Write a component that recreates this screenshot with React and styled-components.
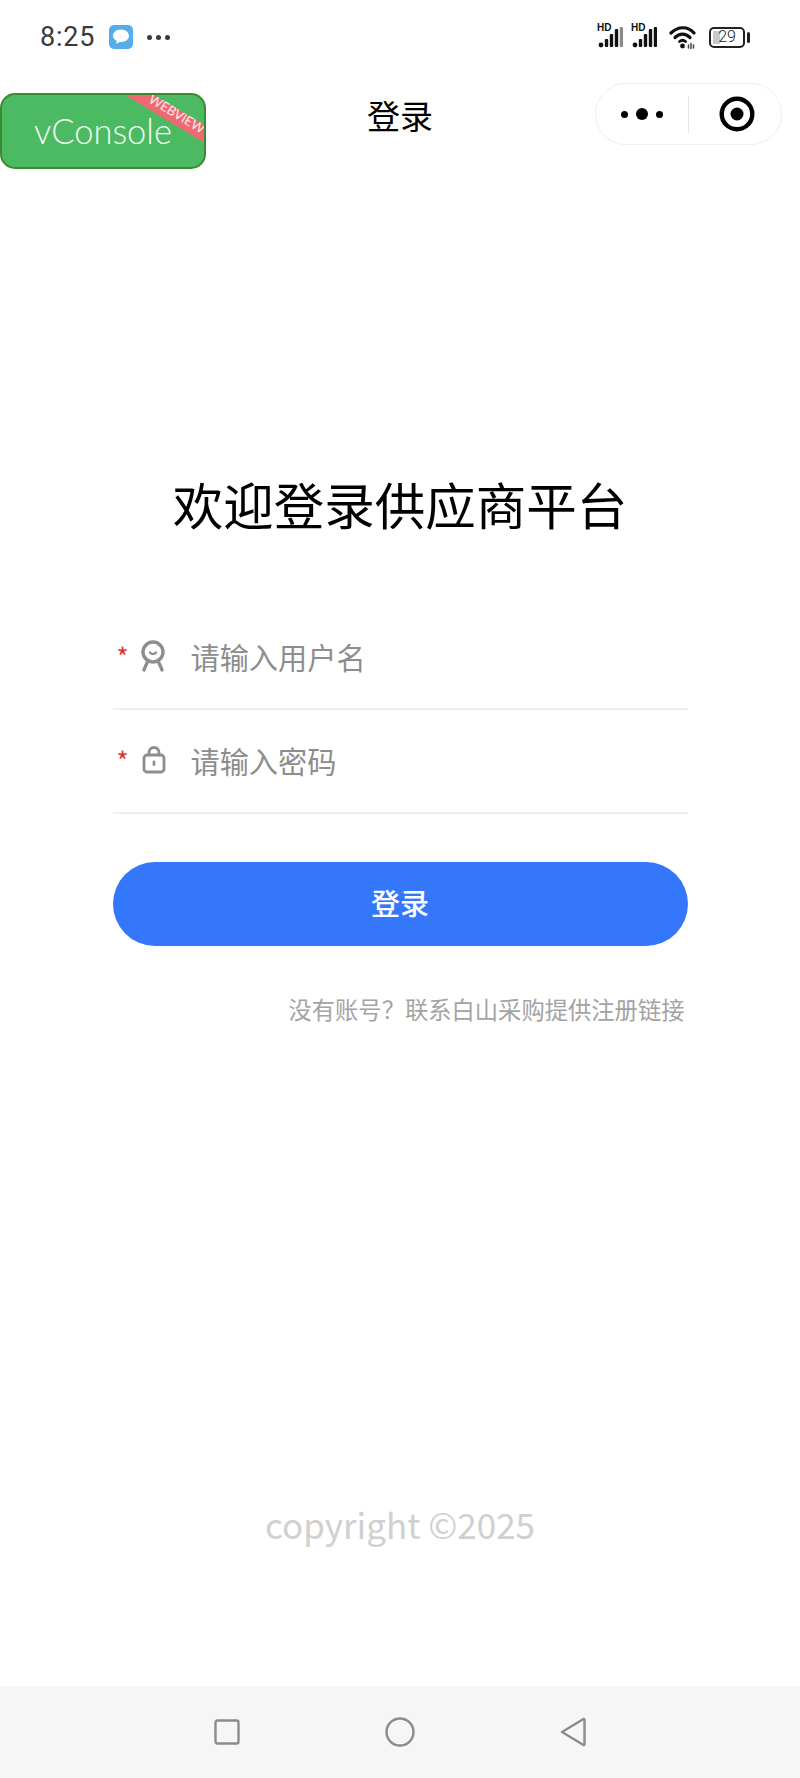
import React from 'react'
import styled, { createGlobalStyle } from 'styled-components'

const CJK = `"Noto Sans CJK SC", "Noto Sans", sans-serif`

const GlobalStyle = createGlobalStyle`
  html, body {
    margin: 0;
    padding: 0;
    background: #fff;
  }
  * {
    box-sizing: border-box;
  }
`

function SignalIcon({ lastColor = '#111' }) {
  return (
    <SignalWrap>
      <SignalLabel>HD</SignalLabel>
      <svg width="25" height="24" viewBox="0 0 25 24">
        <circle cx="3" cy="20" r="2.400" fill="#111" />
        <rect x="6.800" y="14" width="3.400" height="8" rx="1" fill="#111" />
        <rect x="11.800" y="9" width="3.400" height="13" rx="1" fill="#111" />
        <rect x="16.800" y="4" width="3.400" height="18" rx="1" fill="#111" />
        <rect x="21.800" y="2" width="3.200" height="20" rx="1" fill={lastColor} />
      </svg>
    </SignalWrap>
  )
}

function WifiIcon() {
  return (
    <svg width="28" height="24" viewBox="0 0 28 24" fill="none" stroke="#111" strokeLinecap="round">
      <path d="M2 8 C9 1 19 1 25 8" strokeWidth="3.200" />
      <path d="M6 12.500 C10.500 8 16.500 8 21 12.500" strokeWidth="3.200" />
      <path d="M10.500 16.500 C12.300 15 14.700 15 16.500 16.500" strokeWidth="2.800" />
      <circle cx="13.500" cy="21" r="2.400" fill="#111" stroke="none" />
      <path d="M19.500 20v3M22 18.500v5.500M24.500 20v3" stroke="#444" strokeWidth="1.500" />
    </svg>
  )
}

function BadgeIcon() {
  return (
    <svg width="26" height="32" viewBox="0 0 26 32" fill="none" stroke="#8e8e8e" strokeWidth="3.400" strokeLinecap="round">
      <circle cx="13" cy="12" r="10" />
      <path d="M10 12.500 C11 14.500 15 14.500 16 12.500" strokeWidth="2.400" />
      <path d="M8 21 C6.500 24 5 27 4 30 M18 21 C19.500 24 21 27 22 30" />
    </svg>
  )
}

function LockIcon() {
  return (
    <svg width="24" height="28" viewBox="0 0 24 28" fill="none" stroke="#8e8e8e" strokeWidth="2.800" strokeLinecap="round">
      <rect x="2" y="9" width="20" height="17" rx="3" />
      <path d="M7 9 V6.500 C7 3.500 9 1.500 12 1.500 C15 1.500 17 3.500 17 6.500 V9" />
      <path d="M12 16 V18.500" />
    </svg>
  )
}

function App() {
  return (
    <Page>
      <GlobalStyle />
      <StatusBar>
        <StatusLeft>
          <Time>8:25</Time>
          <svg width="24" height="24" viewBox="0 0 24 24">
            <rect width="24" height="24" rx="5" fill="#55aeec" />
            <path d="M12 4.500c-4.500 0-8 2.800-8 6.300 0 2.300 1.500 4.200 3.800 5.300l-.6 3 3.400-2.200c.5.100.9.100 1.400.100 4.500 0 8-2.800 8-6.200s-3.500-6.300-8-6.300z" fill="#fff" />
          </svg>
          <Dots>
            <Dot /><Dot /><Dot />
          </Dots>
        </StatusLeft>
        <StatusRight>
          <SignalIcon lastColor="#8a8a8a" />
          <SignalIcon />
          <WifiIcon />
          <Battery>
            <BatteryBody>
              <BatteryFill />
              <BatteryText>29</BatteryText>
            </BatteryBody>
            <BatteryCap />
          </Battery>
        </StatusRight>
      </StatusBar>

      <NavBar>
        <NavTitle>登录</NavTitle>
        <Capsule>
          <MoreButton>
            <MoreDot /><MoreDot $big /><MoreDot />
          </MoreButton>
          <CapsuleDivider />
          <TargetButton>
            <svg width="36" height="36" viewBox="0 0 36 36">
              <circle cx="18" cy="18" r="15.300" fill="none" stroke="#000" strokeWidth="4.400" />
              <circle cx="18" cy="18" r="6.500" fill="#000" />
            </svg>
          </TargetButton>
        </Capsule>
      </NavBar>

      <VConsole>
        vConsole
        <Ribbon>WEBVIEW</Ribbon>
      </VConsole>

      <Main>
        <Heading>欢迎登录供应商平台</Heading>
        <Form>
          <Field>
            <Required>*</Required>
            <FieldIcon><BadgeIcon /></FieldIcon>
            <Placeholder>请输入用户名</Placeholder>
          </Field>
          <Field>
            <Required>*</Required>
            <FieldIcon $inset={2}><LockIcon /></FieldIcon>
            <Placeholder>请输入密码</Placeholder>
          </Field>
          <LoginButton>登录</LoginButton>
          <Hint>没有账号？联系白山采购提供注册链接</Hint>
        </Form>
      </Main>

      <Copyright>copyright ©2025</Copyright>

      <BottomBar>
        <svg width="26" height="26" viewBox="0 0 26 26">
          <rect x="1.500" y="1.500" width="23" height="23" rx="2" fill="none" stroke="#8c8c8c" strokeWidth="2.400" />
        </svg>
        <svg width="30" height="30" viewBox="0 0 30 30">
          <circle cx="15" cy="15" r="13.500" fill="none" stroke="#8c8c8c" strokeWidth="2.400" />
        </svg>
        <svg width="26" height="30" viewBox="0 0 26 30">
          <path d="M2 15 L23.500 2 Q24.500 1.800 24.500 3 V27 Q24.500 28.200 23.500 28 Z" fill="none" stroke="#8c8c8c" strokeWidth="2.400" strokeLinejoin="round" />
        </svg>
      </BottomBar>
    </Page>
  )
}

export default App

const Page = styled.div`
  position: relative;
  width: 800px;
  height: 1778px;
  display: flex;
  flex-direction: column;
  overflow: hidden;
  background: #fff;
  font-family: ${CJK};
`

const StatusBar = styled.div`
  height: 74px;
  padding: 0 50px 0 40px;
  display: flex;
  align-items: center;
  justify-content: space-between;
`

const StatusLeft = styled.div`
  display: flex;
  align-items: center;
  gap: 14px;
`

const Time = styled.span`
  font-family: Roboto, sans-serif;
  font-size: 27px;
  letter-spacing: 0.8px;
  color: #3a3a3a;
`

const Dots = styled.div`
  display: flex;
  gap: 4px;
`

const Dot = styled.span`
  width: 5px;
  height: 5px;
  border-radius: 50%;
  background: #3a3a3a;
`

const StatusRight = styled.div`
  display: flex;
  align-items: center;
  gap: 12px;
`

const SignalWrap = styled.div`
  position: relative;
  width: 25px;
  height: 24px;

  & + & {
    margin-left: -3px;
  }
`

const SignalLabel = styled.span`
  position: absolute;
  left: -1px;
  top: -2px;
  font-family: "Liberation Sans", sans-serif;
  font-size: 10px;
  line-height: 10px;
  font-weight: 700;
  color: #111;
`

const Battery = styled.div`
  display: flex;
  align-items: center;
  gap: 2px;
`

const BatteryBody = styled.div`
  position: relative;
  width: 36px;
  height: 21px;
  border: 2px solid #222;
  border-radius: 5px;
  display: flex;
  align-items: center;
  justify-content: center;
`

const BatteryFill = styled.div`
  position: absolute;
  left: 2px;
  top: 2px;
  bottom: 2px;
  width: 7px;
  background: #c9c9c9;
`

const BatteryText = styled.span`
  position: relative;
  font-family: Roboto, sans-serif;
  font-size: 16px;
  font-weight: 300;
  line-height: 1;
  color: #222;
`

const BatteryCap = styled.div`
  width: 3px;
  height: 11px;
  border-radius: 2px;
  background: #222;
`

const NavBar = styled.div`
  position: relative;
  height: 82px;
  display: flex;
  align-items: center;
  justify-content: center;
`

const NavTitle = styled.div`
  font-size: 33px;
  line-height: 1;
  color: #000;
`

const Capsule = styled.div`
  position: absolute;
  right: 18px;
  top: 9px;
  width: 187px;
  height: 62px;
  border: 1px solid #efefef;
  border-radius: 31px;
  display: flex;
  align-items: center;
`

const MoreButton = styled.div`
  flex: 0 0 92px;
  display: flex;
  align-items: center;
  justify-content: center;
  gap: 8px;
`

const MoreDot = styled.span`
  width: ${(p) => (p.$big ? 12 : 7)}px;
  height: ${(p) => (p.$big ? 12 : 7)}px;
  border-radius: 50%;
  background: #000;
`

const CapsuleDivider = styled.div`
  width: 1px;
  height: 37px;
  background: #e4e4e4;
`

const TargetButton = styled.div`
  flex: 1;
  padding-left: 4px;
  display: flex;
  align-items: center;
  justify-content: center;
`

const VConsole = styled.div`
  position: absolute;
  left: 0;
  top: 93px;
  width: 206px;
  height: 76px;
  padding-bottom: 2px;
  border: 2px solid #3b8a32;
  border-radius: 15px;
  background: #4cb963;
  color: #f0fcf0;
  overflow: hidden;
  display: flex;
  align-items: center;
  justify-content: center;
  font-family: Lato, sans-serif;
  font-size: 34.500px;
  font-weight: 300;
`

const Ribbon = styled.div`
  position: absolute;
  right: -33px;
  top: 15px;
  width: 120px;
  height: 15px;
  padding-right: 4px;
  background: #ee6a72;
  transform: rotate(31deg);
  color: #ffe9ea;
  font-size: 13px;
  font-family: Lato, sans-serif;
  font-weight: 400;
  line-height: 9px;
  text-align: center;
`

const Main = styled.div`
  flex: 1;
  display: flex;
  flex-direction: column;
  align-items: center;
  padding-top: 310px;
`

const Heading = styled.h1`
  margin: 0 0 66px;
  font-size: 50.500px;
  font-weight: 400;
  line-height: 74px;
  color: #000;
`

const Form = styled.div`
  width: 575px;
  display: flex;
  flex-direction: column;
`

const Field = styled.div`
  height: 104px;
  padding-bottom: 3px;
  display: flex;
  align-items: center;
  border-bottom: 2px solid #efefef;
`

const Required = styled.span`
  width: 27px;
  padding-left: 4px;
  font-size: 26px;
  color: #d8352c;
  line-height: 1;
`

const FieldIcon = styled.span`
  width: 51px;
  padding-left: ${(p) => p.$inset || 0}px;
  display: flex;
  align-items: center;
`

const Placeholder = styled.span`
  font-size: 29.200px;
  color: #8d8d8d;
`

const LoginButton = styled.button`
  height: 84px;
  margin-top: 48px;
  padding: 0 0 4px;
  border: none;
  border-radius: 42px;
  background: #3477fb;
  color: #fff;
  font-family: ${CJK};
  font-size: 29px;
  font-weight: 500;
`

const Hint = styled.div`
  margin-top: 46px;
  padding-right: 3px;
  text-align: right;
  font-size: 23.300px;
  line-height: 34px;
  color: #a3a3a3;
`

const Copyright = styled.div`
  height: 187px;
  text-align: center;
  font-size: 35px;
  line-height: 50px;
  color: #d0d0d0;
`

const BottomBar = styled.div`
  height: 92px;
  padding: 0 214px;
  display: flex;
  align-items: center;
  justify-content: space-between;
  background: #f6f6f6;
`
